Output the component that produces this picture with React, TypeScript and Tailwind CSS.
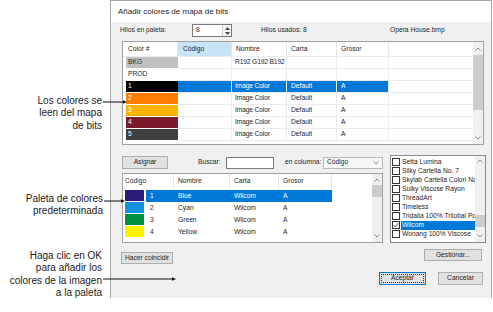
import React from 'react'

const topRows = [
  { id: 'BKG', bg: '#c0c0c0', fg: '#2a2a2a', name: 'R192 G192 B192', carta: '', grosor: '', sel: false },
  { id: 'PROD', bg: '#ffffff', fg: '#2a2a2a', name: '', carta: '', grosor: '', sel: false },
  { id: '1', bg: '#000000', fg: '#ffffff', name: 'Image Color', carta: 'Default', grosor: 'A', sel: true },
  { id: '2', bg: '#ff7d00', fg: '#ffffff', name: 'Image Color', carta: 'Default', grosor: 'A', sel: false },
  { id: '3', bg: '#ffb300', fg: '#ffffff', name: 'Image Color', carta: 'Default', grosor: 'A', sel: false },
  { id: '4', bg: '#7a1a2c', fg: '#ffffff', name: 'Image Color', carta: 'Default', grosor: 'A', sel: false },
  { id: '5', bg: '#404040', fg: '#ffffff', name: 'Image Color', carta: 'Default', grosor: 'A', sel: false },
]

const paletteRows = [
  { id: '1', bg: '#2c1a78', name: 'Blue', sel: true },
  { id: '2', bg: '#1192de', name: 'Cyan', sel: false },
  { id: '3', bg: '#00913e', name: 'Green', sel: false },
  { id: '4', bg: '#fff000', name: 'Yellow', sel: false },
]

const charts = [
  { name: 'Setta Lumina', on: false, sel: false },
  { name: 'Silky Cartella No. 7', on: false, sel: false },
  { name: 'Skylab Cartella Colori Na', on: false, sel: false },
  { name: 'Sulky Viscose Rayon', on: false, sel: false },
  { name: 'ThreadArt', on: false, sel: false },
  { name: 'Timeless', on: false, sel: false },
  { name: 'Tridalia 100% Trilobal Po', on: false, sel: false },
  { name: 'Wilcom', on: true, sel: true },
  { name: 'Wonang 100% Viscose', on: false, sel: false },
]

function Chev({ up }: { up?: boolean }) {
  return (
    <svg width="6" height="4" viewBox="0 0 6 4">
      <path d={up ? 'M0.5 3.5L3 1L5.5 3.5' : 'M0.5 0.5L3 3L5.5 0.5'} stroke="#8c8c8c" fill="none" />
    </svg>
  )
}

// thin windows-style vertical scrollbar
function Scroll({ up, thumb, down }: { up: string; thumb: string; down: string }) {
  return (
    <div className="w-[10px] shrink-0 bg-[#f0f0f0] flex flex-col">
      <div className={`${up} flex items-center justify-center`}><Chev up /></div>
      <div className="flex-1">
        <div className={`${thumb} bg-[#cdcdcd]`} />
      </div>
      <div className={`${down} flex items-center justify-center`}><Chev /></div>
    </div>
  )
}

function Btn({ label, className }: { label: string; className: string }) {
  return (
    <div className={`${className} bg-[#e1e1e1] border border-[#adadad] flex items-center justify-center whitespace-nowrap`}>
      {label}
    </div>
  )
}

function Arrow({ x, y, w }: { x: number; y: number; w: number }) {
  return (
    <svg className="absolute" style={{ left: x, top: y - 3 }} width={w} height="6" viewBox={`0 0 ${w} 6`}>
      <line x1="0" y1="3" x2={w - 3} y2="3" stroke="#111" strokeWidth="1" />
      <path d={`M${w - 4} 1.2L${w} 3L${w - 4} 4.8Z`} fill="#111" />
    </svg>
  )
}

function Dialog() {
  return (
    <div className="w-[382px] h-[298px] shrink-0 border border-b-0 border-[#a8a8a8] flex flex-col">
      <div className="h-[21px] bg-white pl-[7px] flex items-center text-[8px] text-[#1e1e1e]">
        Añadir colores de mapa de bits
      </div>

      <div className="flex-1 bg-[#f0f0f0] flex flex-col text-[6.7px] text-[#1e1e1e]">
        {/* Hilos */}
        <div className="mt-[2px] ml-[9px] h-[13px] flex items-center whitespace-nowrap">
          <span className="w-[72px]">Hilos en paleta:</span>
          <div className="w-[40px] h-[13px] bg-white border border-[#7a7a7a] flex">
            <span className="flex-1 pl-[3px] flex items-center">8</span>
            <div className="w-[9px] flex flex-col items-center justify-center gap-[2px] bg-[#f4f4f4] border-l border-[#cfcfcf]">
              <svg width="5" height="3" viewBox="0 0 5 3"><path d="M0 3L2.5 0L5 3Z" fill="#444" /></svg>
              <svg width="5" height="3" viewBox="0 0 5 3"><path d="M0 0L2.5 3L5 0Z" fill="#444" /></svg>
            </div>
          </div>
          <span className="ml-[29px] w-[129px]">Hilos usados: 8</span>
          <span>Opera House.bmp</span>
        </div>

        {/* Bitmap colours */}
        <div className="mt-[4px] ml-[11px] w-[362px] h-[104px] border border-[#a0a0a0] bg-white flex">
          <div className="flex-1 min-w-0 flex flex-col">
            <div className="h-[15px] flex items-center border-b border-[#ececec]">
              <div className="w-[55px] h-full pl-[5px] flex items-center border-r border-[#e6e6e6]">Color #</div>
              <div className="w-[54px] h-full pl-[5px] flex items-center bg-[#c8e2f6] border-r border-[#e6e6e6]">Código</div>
              <div className="w-[55px] h-full pl-[4px] flex items-center border-r border-[#e6e6e6]">Nombre</div>
              <div className="w-[50px] h-full pl-[4px] flex items-center border-r border-[#e6e6e6]">Carta</div>
              <div className="w-[52px] h-full pl-[4px] flex items-center border-r border-[#e6e6e6]">Grosor</div>
              <div className="flex-1" />
            </div>
            {topRows.map(r => {
              const sel = r.sel ? 'bg-[#0078d7] text-white' : ''
              return (
                <div key={r.id} className="h-[12px] flex">
                  <div className="w-[55px] pl-[3px] border-b border-white">
                    <div className="h-full pl-[2px] flex items-center" style={{ background: r.bg, color: r.fg }}>{r.id}</div>
                  </div>
                  <div className={`w-[54px] border-r border-b border-[#ececec] ${sel}`} />
                  <div className={`w-[55px] pl-[3px] flex items-center whitespace-nowrap overflow-hidden tracking-[-0.15px] border-r border-b border-[#ececec] ${sel}`}>{r.name}</div>
                  <div className={`w-[50px] pl-[4px] flex items-center border-r border-b border-[#ececec] ${sel}`}>{r.carta}</div>
                  <div className={`w-[52px] pl-[4px] flex items-center border-r border-b border-[#ececec] ${sel}`}>{r.grosor}</div>
                  <div className="flex-1 border-b border-[#ececec]" />
                </div>
              )
            })}
          </div>
          <Scroll up="h-[13px]" thumb="h-[55px]" down="h-[12px]" />
        </div>

        {/* Palette + charts */}
        <div className="mt-[10px] ml-[11px] flex items-start">
          <div className="w-[261px] flex flex-col">
            <div className="mt-[1px] h-[13px] flex items-center whitespace-nowrap">
              <Btn label="Asignar" className="w-[46px] h-[13px]" />
              <span className="ml-[30px] w-[28px]">Buscar:</span>
              <div className="w-[48px] h-[12px] bg-white border border-[#7a7a7a]" />
              <span className="ml-[11px] w-[38px]">en columna:</span>
              <div className="w-[60px] h-[12px] bg-[#f6f6f6] border border-[#b9b9b9] pl-[3px] pr-[3px] flex items-center justify-between">
                <span>Código</span>
                <Chev />
              </div>
            </div>

            <div className="mt-[4px] h-[70px] border border-[#a0a0a0] bg-white flex">
              <div className="flex-1 min-w-0 flex flex-col">
                <div className="h-[15px] flex items-center">
                  <div className="w-[51px] h-full pl-[2px] flex items-center border-r border-[#e6e6e6]">Código</div>
                  <div className="w-[56px] h-full pl-[4px] flex items-center border-r border-[#e6e6e6]">Nombre</div>
                  <div className="w-[49px] h-full pl-[4px] flex items-center border-r border-[#e6e6e6]">Carta</div>
                  <div className="w-[53px] h-full pl-[4px] flex items-center border-r border-[#e6e6e6]">Grosor</div>
                  <div className="flex-1" />
                </div>
                <div className="mt-[1px]">
                  {paletteRows.map(r => {
                    const sel = r.sel ? 'bg-[#0078d7] text-white' : ''
                    return (
                      <div key={r.id} className="h-[12px] flex">
                        <div className="w-[51px] pl-[2px] flex">
                          <div className="w-[19px] h-[11px]" style={{ background: r.bg }} />
                          <div className={`flex-1 ml-[2px] pl-[4px] flex items-center ${sel}`}>{r.id}</div>
                        </div>
                        <div className={`w-[56px] pl-[4px] flex items-center ${sel}`}>{r.name}</div>
                        <div className={`w-[49px] pl-[4px] flex items-center ${sel}`}>Wilcom</div>
                        <div className={`w-[53px] pl-[4px] flex items-center ${sel}`}>A</div>
                        <div className="flex-1" />
                      </div>
                    )
                  })}
                </div>
              </div>
              <Scroll up="h-[11px]" thumb="h-[12px]" down="h-[12px]" />
            </div>
          </div>

          <div className="ml-[7px] w-[96px] h-[88px] border border-[#8a8a8a] bg-white flex">
            <div className="flex-1 min-w-0 pt-[1px] flex flex-col">
              {charts.map(c => (
                <div key={c.name} className="h-[9.1px] flex items-center">
                  <div className="ml-[1px] w-[8px] h-[8px] shrink-0 border border-[#333] bg-white flex items-center justify-center">
                    {c.on && (
                      <svg width="6" height="6" viewBox="0 0 6 6"><path d="M0.5 3.2L2.2 5L5.5 0.8" stroke="#333" fill="none" strokeWidth="0.8" /></svg>
                    )}
                  </div>
                  <div className={`flex-1 h-full ml-[1px] pl-[1px] flex items-center whitespace-nowrap overflow-hidden ${c.sel ? 'bg-[#0078d7] text-white' : ''}`}>
                    {c.name}
                  </div>
                </div>
              ))}
            </div>
            <Scroll up="h-[10px]" thumb="mt-[49px] h-[12px]" down="h-[13px]" />
          </div>
        </div>

        {/* Buttons */}
        <div className="mt-[6px] flex items-start justify-between">
          <Btn label="Hacer coincidir" className="mt-[3px] ml-[10px] w-[52px] h-[12px]" />
          <Btn label="Gestionar..." className="mr-[9px] w-[58px] h-[12px]" />
        </div>
        <div className="mt-[8px] mr-[8px] flex justify-end gap-[12px]">
          <div className="w-[47px] h-[13px] bg-[#e1e1e1] border border-[#0078d7] p-[1px]">
            <div className="h-full border border-dotted border-[#333] flex items-center justify-center">Aceptar</div>
          </div>
          <Btn label="Cancelar" className="w-[45px] h-[13px]" />
        </div>
      </div>
    </div>
  )
}

export default function App() {
  return (
    <div className="relative w-[493px] h-[312px] bg-white overflow-hidden font-['Liberation_Sans',Arial,sans-serif]">
      <div className="flex h-full">
        <div className="w-[110px] shrink-0" />
        <Dialog />
      </div>

      {/* callouts */}
      <div className="absolute left-0 top-[95px] w-[102px] text-right text-[10px] leading-[12.3px] text-[#1a1a1a]">
        <div>Los colores se</div>
        <div>leen del mapa</div>
        <div>de bits</div>
      </div>
      <Arrow x={103} y={102} w={24} />

      <div className="absolute left-0 top-[193px] w-[103px] text-right text-[10px] leading-[12.3px] text-[#1a1a1a]">
        <div>Paleta de colores</div>
        <div>predeterminada</div>
      </div>
      <Arrow x={104} y={201} w={21} />

      <div className="absolute left-0 top-[250px] w-[102px] text-right text-[10px] leading-[12.3px] text-[#1a1a1a]">
        <div>Haga clic en OK</div>
        <div>para añadir los</div>
        <div>colores de la imagen</div>
        <div>a la paleta</div>
      </div>
      <Arrow x={103} y={279} w={73} />
    </div>
  )
}
